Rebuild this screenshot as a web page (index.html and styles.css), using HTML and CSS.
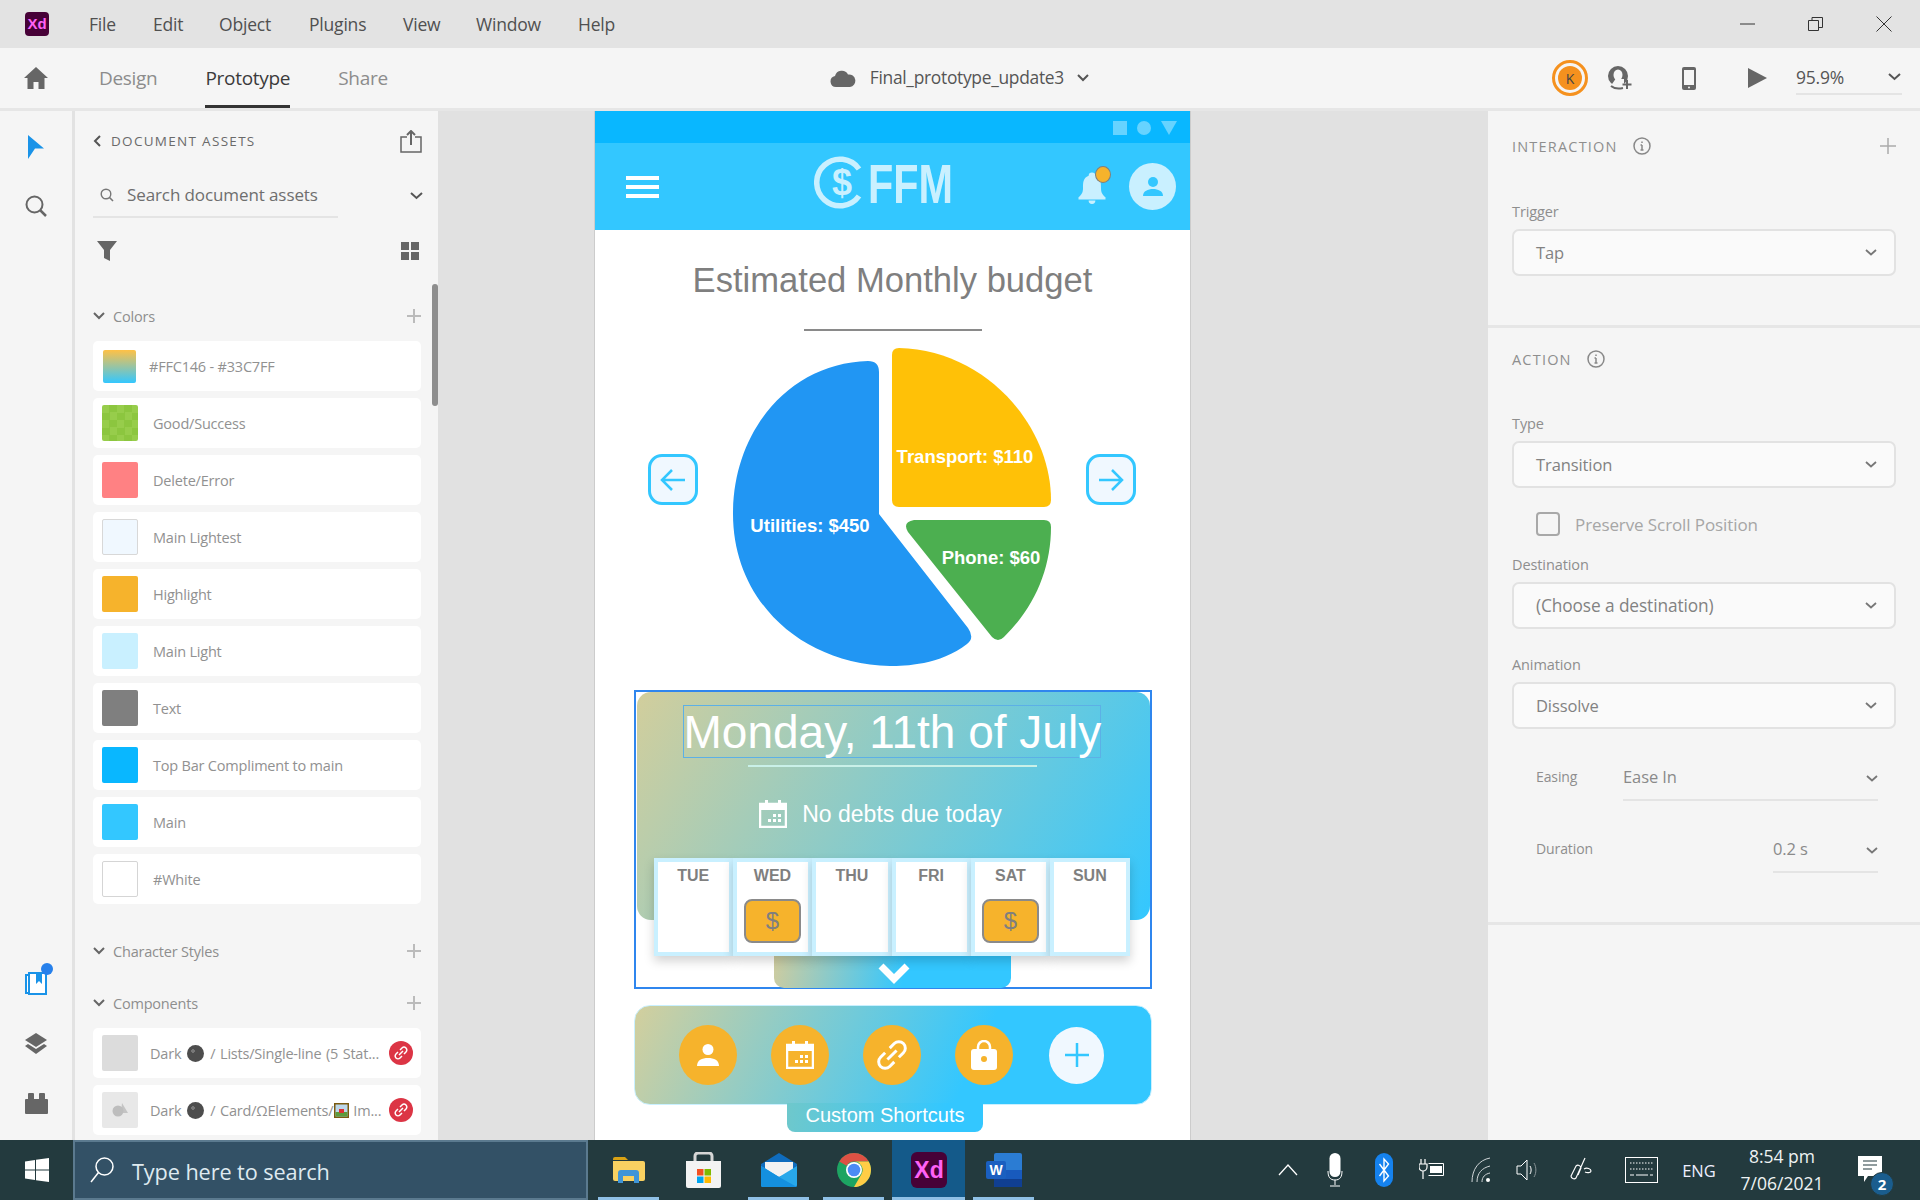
FILE: index.html
```html
<!DOCTYPE html>
<html lang="en">
<head>
<meta charset="utf-8">
<title>Adobe XD - Final_prototype_update3</title>
<link rel="stylesheet" href="styles.css">
</head>
<body>
<div class="app">
  <header class="titlebar">
    <svg class="xd-logo" width="24" height="24" viewBox="0 0 24 24"><rect width="24" height="24" rx="4" fill="#470137"/><text x="12" y="17" text-anchor="middle" class="xd-logo-text">Xd</text></svg>
    <nav class="menu"><span class="m-file">File</span><span class="m-edit">Edit</span><span class="m-object">Object</span><span class="m-plugins">Plugins</span><span class="m-view">View</span><span class="m-window">Window</span><span>Help</span></nav>
    <div class="winctl">
      <svg width="16" height="16" viewBox="0 0 16 16"><path d="M0 8h15" stroke="#333" fill="none"/></svg>
      <svg width="16" height="16" viewBox="0 0 16 16"><path d="M.5 4.500h10v10H.5zM4 4.500V1.500h10.500v10H11" stroke="#333" fill="none"/></svg>
      <svg width="16" height="16" viewBox="0 0 16 16"><path d="M.5.5l15 15M15.500.5l-15 15" stroke="#333" fill="none"/></svg>
    </div>
  </header>

  <div class="toolbar">
    <svg class="home" width="24" height="22" viewBox="0 0 24 22"><path d="M12 0L0 11h3.500v11h6v-7h5v7h6V11H24z" fill="#666"/></svg>
    <nav class="tabs"><span class="tab">Design</span><span class="tab tab-on">Prototype</span><span class="tab">Share</span></nav>
    <div class="doc">
      <svg width="26" height="17" viewBox="0 0 26 17"><path d="M6 17a5.500 5.500 0 0 1-1-10.900A7 7 0 0 1 18 4.500 6.300 6.300 0 0 1 20 17z" fill="#666"/></svg>
      <span class="doc-name">Final_prototype_update3</span>
      <svg class="chev" width="12" height="8" viewBox="0 0 12 8"><path d="M1 1l5 5 5-5" stroke="#555" stroke-width="2" fill="none"/></svg>
    </div>
    <div class="tool-right">
      <div class="avatar-k"><span>K</span></div>
      <svg class="i-share" width="26" height="24" viewBox="0 0 26 24"><circle cx="11" cy="10" r="10" fill="#666"/><ellipse cx="11" cy="9" rx="4.500" ry="5.500" fill="#f5f5f5"/><path d="M8.500 13L4 19.500c3 2.500 9 3 13 1V13z" fill="#f5f5f5"/><path d="M4 20c3 2.500 8 3 12 2" stroke="#666" stroke-width="2" fill="none"/><path d="M20 14v9M15.500 18.500h9" stroke="#666" stroke-width="2" fill="none"/></svg>
      <svg class="i-phone" width="14" height="23" viewBox="0 0 14 23"><rect width="14" height="23" rx="2" fill="#666"/><rect x="2" y="3" width="10" height="15" fill="#f5f5f5"/><circle cx="7" cy="20.500" r="1" fill="#f5f5f5"/></svg>
      <svg class="i-play" width="20" height="20" viewBox="0 0 20 20"><path d="M1 0l19 10L1 20z" fill="#666"/></svg>
      <div class="zoom-val"><span>95.9%</span><svg width="13" height="8" viewBox="0 0 13 8"><path d="M1 1l5.500 5L12 1" stroke="#555" stroke-width="2" fill="none"/></svg></div>
    </div>
  </div>

  <div class="main">
    <aside class="rail">
      <div class="rail-group">
        <svg width="18" height="24" viewBox="0 0 18 24"><path d="M1 0l16 13.500H8L1 24z" fill="#1a93e8"/></svg>
        <svg width="22" height="22" viewBox="0 0 22 22"><circle cx="9.500" cy="9.500" r="8" stroke="#666" stroke-width="2" fill="none"/><path d="M15 15l6 6" stroke="#666" stroke-width="2.500"/></svg>
      </div>
      <div class="rail-group rail-bottom">
        <div class="asset-ico">
          <svg width="22" height="24" viewBox="0 0 22 24"><path d="M4 4H1v18h3M4 2h17v21H4z" stroke="#1a93e8" stroke-width="2" fill="#fff"/><path d="M11 3h6v10l-3-3-3 3z" fill="#1a93e8"/></svg>
          <i class="asset-dot"></i>
        </div>
        <svg width="24" height="24" viewBox="0 0 24 24"><path d="M12 1l11 7-11 7L1 8z" fill="#666"/><path d="M1 12l3-2 8 5 8-5 3 2-11 8z" fill="#666" transform="translate(0 2)"/></svg>
        <svg width="23" height="21" viewBox="0 0 23 21"><path d="M0 7a1 1 0 0 1 1-1h2V1a1 1 0 0 1 1-1h4a1 1 0 0 1 1 1v5h5V1a1 1 0 0 1 1-1h4a1 1 0 0 1 1 1v5h2a1 1 0 0 1 1 1v13a1 1 0 0 1-1 1H1a1 1 0 0 1-1-1z" fill="#666"/></svg>
      </div>
    </aside>

    <section class="assets">
      <div class="assets-head">
        <svg width="8" height="12" viewBox="0 0 8 12"><path d="M7 1L2 6l5 5" stroke="#555" stroke-width="2" fill="none"/></svg>
        <span class="assets-title">DOCUMENT ASSETS</span>
        <svg class="push export" width="22" height="23" viewBox="0 0 22 23"><path d="M7 7H1v15h20V7h-6" stroke="#666" stroke-width="1.500" fill="none"/><path d="M11 15V2M7 5l4-4 4 4" stroke="#666" stroke-width="2" fill="none"/></svg>
      </div>
      <div class="search-row">
        <div class="search-box">
          <svg width="14" height="14" viewBox="0 0 14 14"><circle cx="6" cy="6" r="4.800" stroke="#777" stroke-width="1.400" fill="none"/><path d="M9.500 9.500L13 13" stroke="#777" stroke-width="1.600"/></svg>
          <span>Search document assets</span>
        </div>
        <svg class="push search-chev" width="13" height="8" viewBox="0 0 13 8"><path d="M1 1l5.500 5L12 1" stroke="#555" stroke-width="2" fill="none"/></svg>
      </div>
      <div class="filter-row">
        <svg width="20" height="20" viewBox="0 0 20 20"><path d="M0 0h20l-7 9v11l-6-3V9z" fill="#666"/></svg>
        <svg class="push" width="18" height="18" viewBox="0 0 18 18"><path d="M0 0h8v8H0zM10 0h8v8h-8zM0 10h8v8H0zM10 10h8v8h-8z" fill="#666"/></svg>
      </div>
      <div class="sec-head sec-colors">
        <svg width="12" height="8" viewBox="0 0 12 8"><path d="M1 1l5 5 5-5" stroke="#666" stroke-width="2" fill="none"/></svg>
        <span>Colors</span>
        <svg class="push" width="14" height="14" viewBox="0 0 14 14"><path d="M7 0v14M0 7h14" stroke="#bbb" stroke-width="2"/></svg>
      </div>
      <ul class="rows">
        <li class="row"><i class="sw sw-grad"></i><span class="row-t row-t-a">#FFC146 - #33C7FF</span></li>
        <li class="row"><i class="sw sw-good"></i><span class="row-t">Good/Success</span></li>
        <li class="row"><i class="sw sw-err"></i><span class="row-t">Delete/Error</span></li>
        <li class="row"><i class="sw sw-lightest"></i><span class="row-t">Main Lightest</span></li>
        <li class="row"><i class="sw sw-high"></i><span class="row-t">Highlight</span></li>
        <li class="row"><i class="sw sw-light"></i><span class="row-t">Main Light</span></li>
        <li class="row"><i class="sw sw-text"></i><span class="row-t">Text</span></li>
        <li class="row"><i class="sw sw-top"></i><span class="row-t">Top Bar Compliment to main</span></li>
        <li class="row"><i class="sw sw-main"></i><span class="row-t">Main</span></li>
        <li class="row"><i class="sw sw-white"></i><span class="row-t">#White</span></li>
      </ul>
      <div class="sec-head sec-char">
        <svg width="12" height="8" viewBox="0 0 12 8"><path d="M1 1l5 5 5-5" stroke="#666" stroke-width="2" fill="none"/></svg>
        <span>Character Styles</span>
        <svg class="push" width="14" height="14" viewBox="0 0 14 14"><path d="M7 0v14M0 7h14" stroke="#bbb" stroke-width="2"/></svg>
      </div>
      <div class="sec-head sec-comp">
        <svg width="12" height="8" viewBox="0 0 12 8"><path d="M1 1l5 5 5-5" stroke="#666" stroke-width="2" fill="none"/></svg>
        <span>Components</span>
        <svg class="push" width="14" height="14" viewBox="0 0 14 14"><path d="M7 0v14M0 7h14" stroke="#bbb" stroke-width="2"/></svg>
      </div>
      <ul class="rows rows-comp">
        <li class="row"><i class="sw sw-c1"></i><span class="comp-t">Dark <i class="moon"></i> / Lists/Single-line (5 Stat...</span>
          <svg class="link" width="24" height="24" viewBox="0 0 24 24"><circle cx="12" cy="12" r="12" fill="#dc3545"/><path d="M10 14l4-4M9 11l-2 2a2.800 2.800 0 0 0 4 4l2-2M15 13l2-2a2.800 2.800 0 0 0-4-4l-2 2" stroke="#fff" stroke-width="1.500" fill="none"/></svg></li>
        <li class="row"><i class="sw sw-c2"><svg width="16" height="14" viewBox="0 0 16 14"><path d="M10 0l6 10H9z" fill="#c4c4c4"/><circle cx="6" cy="8" r="5.500" fill="#bdbdbd"/></svg></i><span class="comp-t">Dark <i class="moon"></i> / Card/ΩElements/<svg class="pic" width="15" height="15" viewBox="0 0 15 15"><rect width="15" height="15" fill="#7a5a10"/><rect x="1.500" y="1.500" width="12" height="12" fill="#bcd7ea"/><rect x="1.500" y="9" width="12" height="4.500" fill="#5d9b3c"/><rect x="5" y="6" width="5" height="4" fill="#d33"/></svg> Im...</span>
          <svg class="link" width="24" height="24" viewBox="0 0 24 24"><circle cx="12" cy="12" r="12" fill="#dc3545"/><path d="M10 14l4-4M9 11l-2 2a2.800 2.800 0 0 0 4 4l2-2M15 13l2-2a2.800 2.800 0 0 0-4-4l-2 2" stroke="#fff" stroke-width="1.500" fill="none"/></svg></li>
      </ul>
      <i class="scrollbar"></i>
    </section>

    <section class="canvas">
      <article class="board">
        <div class="status"><i class="st-sq"></i><i class="st-ci"></i><i class="st-tr"></i></div>
        <div class="bar">
          <div class="burger"><i></i><i></i><i></i></div>
          <svg class="logo" width="172" height="58" viewBox="0 0 172 58">
            <path d="M45 13A23.300 23.300 0 1 0 45 40" stroke="#c9f0ff" stroke-width="5.500" fill="none"/>
            <text x="18" y="39" class="logo-d">$</text>
            <text x="54" y="46.500" class="logo-t" textLength="85" lengthAdjust="spacingAndGlyphs">FFM</text>
          </svg>
          <div class="bell-wrap">
            <svg width="36" height="36" viewBox="0 0 32 32"><path d="M16 3a3 3 0 0 0-3 3C8 8 8 12 8 17c0 4-1.500 6-4 8v2h24v-2c-2.500-2-4-4-4-8 0-5 0-9-5-11a3 3 0 0 0-3-3z" fill="#c9f0ff"/><path d="M13 28a3 3 0 0 0 6 0z" fill="#c9f0ff"/></svg>
            <i class="bell-dot"></i>
          </div>
          <div class="user"><svg width="26" height="26" viewBox="0 0 26 26"><circle cx="13" cy="8" r="5" fill="#33c7ff"/><path d="M3 22c0-5 5-7 10-7s10 2 10 7z" fill="#33c7ff"/></svg></div>
        </div>
        <h1 class="b-title">Estimated Monthly budget</h1>
        <div class="b-rule"></div>
        <div class="chart">
          <button class="arrow" type="button"><svg width="26" height="24" viewBox="0 0 26 24"><path d="M25 12H2M12 2L2 12l10 10" stroke="#33c7ff" stroke-width="2.500" fill="none"/></svg></button>
          <svg class="pie" width="340" height="340" viewBox="722 340 340 340">
            <path d="M879 514L968 628Q975 638 967 644C940 665 905 666 890 666C800 664 733 600 733 514C733 430 790 363 868 361Q879 361 879 372Z" fill="#2196f3"/>
            <path d="M892 355Q892 348 899 348C985 350 1051 425 1051 500Q1051 507 1044 507L899 507Q892 507 892 500Z" fill="#ffc107"/>
            <path d="M914 520L1044 520Q1051 520 1051 527C1051 568 1035 607 1004 637Q998 643 992 637L908 532Q902 522 914 520Z" fill="#4caf50"/>
            <text x="810" y="532" class="pie-t" text-anchor="middle">Utilities: $450</text>
            <text x="965" y="463" class="pie-t" text-anchor="middle">Transport: $110</text>
            <text x="991" y="564" class="pie-t" text-anchor="middle">Phone: $60</text>
          </svg>
          <button class="arrow" type="button"><svg width="26" height="24" viewBox="0 0 26 24"><path d="M1 12h23M14 2l10 10-10 10" stroke="#33c7ff" stroke-width="2.500" fill="none"/></svg></button>
        </div>
        <div class="sel">
          <div class="panel">
            <div class="date">Monday, 11th of July</div>
            <div class="date-rule"></div>
            <div class="note">
              <svg width="28" height="28" viewBox="0 0 28 28"><path d="M1 4h26v23H1z" stroke="#fff" stroke-width="2.500" fill="none"/><path d="M1 4h26v6H1zM6 0h3v5H6zM19 0h3v5h-3z" fill="#fff"/><path d="M14 14h3v3h-3zM19 14h3v3h-3zM9 19h3v3H9zM14 19h3v3h-3zM19 19h3v3h-3z" fill="#fff"/></svg>
              <span>No debts due today</span>
            </div>
            <div class="week">
              <div class="day"><b>TUE</b></div>
              <div class="day"><b>WED</b><span class="pay">$</span></div>
              <div class="day"><b>THU</b></div>
              <div class="day"><b>FRI</b></div>
              <div class="day"><b>SAT</b><span class="pay">$</span></div>
              <div class="day"><b>SUN</b></div>
            </div>
          </div>
          <div class="more"><svg width="34" height="26" viewBox="0 0 34 26"><path d="M4 5l13 13L30 5" stroke="#fff" stroke-width="7" fill="none"/></svg></div>
        </div>
        <div class="shortcuts">
          <span class="sc"><svg width="24" height="24" viewBox="0 0 24 24"><circle cx="12" cy="6.500" r="5.500" fill="#fff"/><path d="M1 23c0-6 5-8 11-8s11 2 11 8z" fill="#fff"/></svg></span>
          <span class="sc"><svg width="28" height="28" viewBox="0 0 28 28"><path d="M1 4h26v23H1z" stroke="#fff" stroke-width="2.500" fill="none"/><path d="M1 4h26v6H1zM6 0h3v5H6zM19 0h3v5h-3z" fill="#fff"/><path d="M14 14h3v3h-3zM19 14h3v3h-3zM9 19h3v3H9zM14 19h3v3h-3zM19 19h3v3h-3z" fill="#fff"/></svg></span>
          <span class="sc"><svg width="32" height="32" viewBox="5 5 14 14"><path d="M10 14l4-4M9 11l-2 2a2.800 2.800 0 0 0 4 4l2-2M15 13l2-2a2.800 2.800 0 0 0-4-4l-2 2" stroke="#fff" stroke-width="1.300" fill="none"/></svg></span>
          <span class="sc"><svg width="26" height="30" viewBox="0 0 26 30"><path d="M7 11V7a6 6 0 0 1 12 0v4" stroke="#fff" stroke-width="2.500" fill="none"/><rect y="9" width="26" height="21" rx="3" fill="#fff"/><circle cx="13" cy="19" r="3" fill="#f6b32c"/></svg></span>
          <span class="sc sc-add"><svg width="26" height="26" viewBox="0 0 26 26"><path d="M13 1v24M1 13h24" stroke="#33c7ff" stroke-width="2.500"/></svg></span>
        </div>
        <div class="sc-tab">Custom Shortcuts</div>
      </article>
    </section>

    <aside class="inspector">
      <section class="ins-a">
        <div class="ins-head"><span class="ins-title">INTERACTION</span>
          <svg width="18" height="18" viewBox="0 0 18 18"><circle cx="9" cy="9" r="8" stroke="#888" stroke-width="1.500" fill="none"/><path d="M9 8v5M7.500 8H9M7.500 13h3M9 4.500v1.500" stroke="#888" stroke-width="1.500"/></svg>
          <svg class="push" width="16" height="16" viewBox="0 0 16 16"><path d="M8 0v16M0 8h16" stroke="#aaa" stroke-width="1.500"/></svg>
        </div>
        <label class="lbl l-trigger">Trigger</label>
        <div class="sel-box"><span>Tap</span><svg width="12" height="7" viewBox="0 0 12 7"><path d="M1 1l5 4.500L11 1" stroke="#777" stroke-width="1.800" fill="none"/></svg></div>
      </section>
      <section class="ins-b">
        <div class="ins-head"><span class="ins-title">ACTION</span>
          <svg width="18" height="18" viewBox="0 0 18 18"><circle cx="9" cy="9" r="8" stroke="#888" stroke-width="1.500" fill="none"/><path d="M9 8v5M7.500 8H9M7.500 13h3M9 4.500v1.500" stroke="#888" stroke-width="1.500"/></svg>
        </div>
        <label class="lbl l-type">Type</label>
        <div class="sel-box"><span>Transition</span><svg width="12" height="7" viewBox="0 0 12 7"><path d="M1 1l5 4.500L11 1" stroke="#777" stroke-width="1.800" fill="none"/></svg></div>
        <div class="check"><i class="box"></i><span>Preserve Scroll Position</span></div>
        <label class="lbl l-dest">Destination</label>
        <div class="sel-box sel-dest"><span>(Choose a destination)</span><svg width="12" height="7" viewBox="0 0 12 7"><path d="M1 1l5 4.500L11 1" stroke="#777" stroke-width="1.800" fill="none"/></svg></div>
        <label class="lbl l-anim">Animation</label>
        <div class="sel-box"><span>Dissolve</span><svg width="12" height="7" viewBox="0 0 12 7"><path d="M1 1l5 4.500L11 1" stroke="#777" stroke-width="1.800" fill="none"/></svg></div>
        <div class="prop p-ease"><span class="prop-l">Easing</span><div class="prop-v v-ease"><span>Ease In</span><svg width="12" height="7" viewBox="0 0 12 7"><path d="M1 1l5 4.500L11 1" stroke="#777" stroke-width="1.800" fill="none"/></svg></div></div>
        <div class="prop p-dur"><span class="prop-l">Duration</span><div class="prop-v v-dur"><span>0.2 s</span><svg width="12" height="7" viewBox="0 0 12 7"><path d="M1 1l5 4.500L11 1" stroke="#777" stroke-width="1.800" fill="none"/></svg></div></div>
      </section>
    </aside>
  </div>

  <footer class="taskbar">
    <div class="start"><svg width="24" height="24" viewBox="0 0 24 24"><path d="M0 3.400L10 2v9.500H0zM11 1.800L24 0v11.500H11zM0 12.500h10V22L0 20.600zM11 12.500h13V24l-13-1.800z" fill="#fff"/></svg></div>
    <div class="tb-search">
      <svg width="24" height="26" viewBox="0 0 24 26"><circle cx="14.500" cy="9.500" r="8.500" stroke="#fff" stroke-width="1.500" fill="none"/><path d="M8.500 15.500L1 25" stroke="#fff" stroke-width="1.500"/></svg>
      <span>Type here to search</span>
    </div>
    <div class="tb-apps">
      <div class="tapp tapp-u">
        <svg width="32" height="26" viewBox="0 0 32 26"><path d="M0 2a2 2 0 0 1 2-2h10l3 3h-15z" fill="#d9a214"/><path d="M0 4h30a2 2 0 0 1 2 2v16a2 2 0 0 1-2 2H2a2 2 0 0 1-2-2z" fill="#f9d161"/><path d="M5 26V16a3 3 0 0 1 3-3h15a3 3 0 0 1 3 3v10h-5v-7H10v7z" fill="#3f95d8"/></svg>
      </div>
      <div class="tapp">
        <svg width="35" height="36" viewBox="0 0 35 36"><path d="M9 11V4a3 3 0 0 1 3-3h11a3 3 0 0 1 3 3v7" stroke="#d6d6d6" stroke-width="3" fill="none"/><path d="M0 9h35v25a2 2 0 0 1-2 2H2a2 2 0 0 1-2-2z" fill="#f3f3f3"/><path d="M11 17h6.500v6.500H11z" fill="#f25022"/><path d="M18.500 17H25v6.500h-6.500z" fill="#7fba00"/><path d="M11 24.500h6.500V31H11z" fill="#00a4ef"/><path d="M18.500 24.500H25V31h-6.500z" fill="#ffb900"/></svg>
      </div>
      <div class="tapp tapp-u">
        <svg width="36" height="34" viewBox="0 0 36 34"><path d="M0 11L18 0l18 11v21a2 2 0 0 1-2 2H2a2 2 0 0 1-2-2z" fill="#0f6cbd"/><path d="M4 9h28v9L18 24 4 18z" fill="#f2f2f2"/><path d="M0 13l18 11 18-11v19a2 2 0 0 1-2 2H2a2 2 0 0 1-2-2z" fill="#28a8ea"/><path d="M0 32V13l18 11L36 34H2a2 2 0 0 1-2-2z" fill="#1490df"/></svg>
      </div>
      <div class="tapp tapp-u">
        <svg width="34" height="34" viewBox="0 0 34 34"><circle cx="17" cy="17" r="17" fill="#1da462"/><path d="M17 0a17 17 0 0 1 14.700 8.500H17a8.500 8.500 0 0 0-7.400 4.300L2.300 8.500A17 17 0 0 1 17 0z" fill="#dd5144"/><path d="M31.700 8.500A17 17 0 0 1 17 34l7.400-12.700A8.500 8.500 0 0 0 17 8.500z" fill="#ffcd46"/><circle cx="17" cy="17" r="8" fill="#fff"/><circle cx="17" cy="17" r="6.300" fill="#4c8bf5"/></svg>
      </div>
      <div class="tapp tapp-on tapp-u">
        <svg width="36" height="36" viewBox="0 0 36 36"><rect width="36" height="36" rx="6" fill="#470137"/><text x="18" y="26" text-anchor="middle" class="tb-xd">Xd</text></svg>
      </div>
      <div class="tapp tapp-u">
        <svg width="36" height="34" viewBox="0 0 36 34"><rect x="8" width="28" height="34" rx="2" fill="#2b7cd3"/><rect x="8" y="17" width="28" height="9" fill="#185abd"/><rect x="8" y="26" width="28" height="8" fill="#103f91"/><rect y="8" width="20" height="18" rx="2" fill="#1a5fc0"/><text x="10" y="22" text-anchor="middle" class="tb-w">W</text></svg>
      </div>
    </div>
    <div class="tray">
      <span class="t"><svg width="20" height="12" viewBox="0 0 20 12"><path d="M1 11L10 1l9 10" stroke="#fff" stroke-width="1.300" fill="none"/></svg></span>
      <span class="t"><svg width="16" height="34" viewBox="0 0 16 34"><rect x="2.500" y="0" width="11" height="24" rx="5.500" fill="#fff"/><path d="M1 18c0 6 2 9 7 9s7-3 7-9M8 27v5M3 33h10" stroke="#fff" fill="none"/></svg></span>
      <span class="t"><svg width="18" height="34" viewBox="0 0 18 34"><rect width="18" height="34" rx="9" fill="#1582ee"/><path d="M4.500 11l9 12-4.500 5V6l4.500 5-9 12" stroke="#fff" stroke-width="1.400" fill="none"/></svg></span>
      <span class="t"><svg width="26" height="24" viewBox="0 0 26 24"><path d="M9.500 5.500h15v12h-15" stroke="#fff" fill="none"/><path d="M11 8h12v7H11z" fill="#fff"/><path d="M2 1v5M6 1v5M0 6h8v3a4 4 0 0 1-8 0zM4 13v8" stroke="#fff" fill="none" stroke-width="1.200"/></svg></span>
      <span class="t"><svg width="20" height="26" viewBox="0 0 20 26"><path d="M1 25C1 12 8 3 19 1M6 25c0-9 5-14 13-16M11 25c0-5 3-8 8-9" stroke="#d0d6d8" fill="none"/><circle cx="17" cy="23" r="2" fill="#fff"/></svg></span>
      <span class="t"><svg width="22" height="24" viewBox="0 0 22 24"><path d="M1 8h4l6-6v20l-6-6H1z" stroke="#fff" fill="none"/><path d="M14 8c1.500 2 1.500 6 0 8" stroke="#fff" fill="none"/><path d="M18 5c2.500 4 2.500 10 0 14" stroke="#8a9598" fill="none"/></svg></span>
      <span class="t"><svg width="22" height="28" viewBox="0 0 22 28"><path d="M15 2l-9 20a3 3 0 0 1-5-2l5-10a3 3 0 0 1 5 2l-3 7M14 13c3-2 7 0 7 2s-4 2-6 1" stroke="#fff" stroke-width="1.200" fill="none"/></svg></span>
      <span class="t"><svg width="33" height="26" viewBox="0 0 33 26"><rect x=".5" y=".5" width="32" height="25" stroke="#fff" fill="none"/><path d="M5 6h23M5 12h23" stroke="#fff" stroke-dasharray="1.500 1.500"/><path d="M5 18h4M11 18h12M25 18h3" stroke="#fff"/></svg></span>
      <span class="t t-eng">ENG</span>
      <span class="t t-clock"><span>8:54 pm</span><span>7/06/2021</span></span>
      <span class="t t-note">
        <svg width="24" height="28" viewBox="0 0 24 28"><path d="M0 0h24v20H10l-4 6v-6H0z" fill="#fff"/><path d="M5 5h14M5 9h14M5 13h9" stroke="#233a3e" stroke-width="1.200"/></svg>
        <b class="badge">2</b>
      </span>
    </div>
  </footer>
</div>
</body>
</html>
```

FILE: styles.css
```css
* { box-sizing: border-box; }
html, body { margin: 0; padding: 0; }
body { font-family: "Open Sans", "Noto Sans", sans-serif; background: #e1e1e1; overflow: hidden; }
ul { list-style: none; margin: 0; padding: 0; }
i { display: block; font-style: normal; }
.push { margin-left: auto; }

.app { width: 1920px; height: 1200px; display: flex; flex-direction: column; overflow: hidden; }

/* title bar */
.titlebar { height: 48px; flex: none; background: #e3e3e3; display: flex; align-items: center; padding-left: 25px; }
.xd-logo-text { font: bold 15px "Liberation Sans", sans-serif; fill: #ff61f6; }
.menu { display: flex; margin-left: 40px; font-size: 17.500px; color: #505050; letter-spacing: -.2px; }
.m-file { width: 64px; }
.m-edit { width: 66px; }
.m-object { width: 90px; }
.m-plugins { width: 94px; }
.m-view { width: 73px; }
.m-window { width: 102px; }
.winctl { margin-left: auto; display: flex; align-items: center; gap: 52px; padding-right: 28px; }

/* tool bar */
.toolbar { height: 63px; flex: none; background: #f5f5f5; border-bottom: 3px solid #e6e6e6; display: flex; align-items: center; padding-left: 24px; position: relative; }
.tabs { display: flex; height: 60px; margin-left: 51px; gap: 48px; font-size: 19px; color: #8c8c8c; letter-spacing: -.3px; }
.tab { display: flex; align-items: center; padding-top: 2px; border-bottom: 3px solid transparent; }
.tab-on { color: #3b3b3b; border-bottom-color: #333; }
.doc { display: flex; align-items: center; margin-left: 442px; }
.doc-name { margin: -2px 0 0 14px; font-size: 17.400px; color: #555; letter-spacing: -.3px; }
.doc .chev { margin-left: 13px; }
.tool-right { margin-left: auto; display: flex; align-items: center; padding-right: 18px; }
.avatar-k { width: 36px; height: 36px; border-radius: 50%; border: 3px solid #f5911e; padding: 3px; background: #f5f5f5; }
.avatar-k span { display: flex; justify-content: center; align-items: center; width: 100%; height: 100%; border-radius: 50%; background: #f5911e; font-size: 14px; color: #444; }
.i-share { margin-left: 19px; }
.i-phone { margin-left: 49px; }
.i-play { margin-left: 51px; }
.zoom-val { width: 106px; height: 34px; margin-left: 29px; border-bottom: 2px solid #e4e4e4; display: flex; align-items: center; justify-content: space-between; padding-right: 1px; font-size: 17.500px; color: #555; letter-spacing: -.2px; }

/* body */
.main { flex: 1; display: flex; min-height: 0; }
.rail { width: 75px; flex: none; background: #f5f5f5; border-right: 3px solid #e2e2e2; display: flex; flex-direction: column; justify-content: space-between; align-items: center; padding: 24px 0 26px; }
.rail-group { display: flex; flex-direction: column; align-items: center; gap: 36px; }
.rail-bottom { gap: 37px; }
.asset-ico { position: relative; height: 24px; }
.asset-dot { position: absolute; top: -8px; right: -6px; width: 12px; height: 12px; border-radius: 50%; background: #2680eb; }

/* assets */
.assets { width: 363px; flex: none; background: #f5f5f5; padding: 0 17px 0 18px; position: relative; overflow: hidden; }
.assets-head { display: flex; align-items: center; height: 34px; margin-top: 13px; }
.assets-title { margin-left: 10px; font-size: 13.500px; letter-spacing: 1.300px; color: #6a6a6a; }
.export { margin-right: -1px; }
.search-row { display: flex; align-items: center; margin-top: 15px; height: 45px; }
.search-box { width: 245px; height: 45px; border-bottom: 2px solid #e4e4e4; display: flex; align-items: center; padding-left: 7px; gap: 13px; font-size: 17px; color: #6e6e6e; letter-spacing: -.1px; white-space: nowrap; }
.search-chev { margin-right: -2px; }
.filter-row { display: flex; align-items: center; height: 24px; margin-top: 21px; padding-left: 4px; padding-right: 2px; }
.sec-head { display: flex; align-items: center; height: 20px; font-size: 14.500px; color: #8e8e8e; }
.sec-head span { margin-left: 8px; letter-spacing: -.2px; }
.sec-colors { margin-top: 43px; }
.sec-char { margin-top: 37px; }
.sec-comp { margin-top: 32px; }
.rows { display: flex; flex-direction: column; gap: 7px; margin-top: 15px; }
.rows-comp { margin-top: 15px; }
.row { height: 50px; background: #fff; border-radius: 5px; display: flex; align-items: center; padding: 0 8px 0 9px; font-size: 14.500px; color: #919191; letter-spacing: -.2px; }
.sw { width: 36px; height: 36px; flex: none; border-radius: 2px; }
.row-t { margin-left: 15px; }
.row-t-a { margin-left: 13px; }
.sw-grad { width: 33px; height: 33px; margin-left: 1px; background: linear-gradient(#ffc146, #33c7ff); }
.sw-good { background: conic-gradient(#8cc63f 25%, #97cd4b 0 50%, #8cc63f 0 75%, #97cd4b 0) 0 0 / 15px 15px; }
.sw-err { background: #ff8183; }
.sw-lightest { background: #f0f8ff; border: 1px solid #d8d8d8; }
.sw-high { background: #f6b32c; }
.sw-light { background: #c9f0ff; }
.sw-text { background: #7f7f7f; }
.sw-top { background: #09b7ff; }
.sw-main { background: #33c7ff; }
.sw-white { background: #fff; border: 1px solid #d5d5d5; }
.sw-c1 { background: #dcdcdc; }
.sw-c2 { background: #e8e8e8; display: flex; align-items: center; justify-content: center; }
.comp-t { margin-left: 12px; white-space: nowrap; display: flex; align-items: center; gap: 0; word-spacing: 1px; }
.moon { width: 17px; height: 17px; margin: 0 6px; border-radius: 50%; background: radial-gradient(circle at 35% 35%, #777 0 12%, #4d4d4d 13%); }
.pic { margin: 0 4px 0 1px; }
.link { margin-left: auto; flex: none; }
.scrollbar { position: absolute; right: 0; top: 173px; width: 6px; height: 122px; border-radius: 3px; background: #8e8e8e; }

/* canvas */
.canvas { flex: 1; background: #e1e1e1; padding-left: 156px; min-width: 0; overflow: hidden; }
.board { width: 597px; height: 1029px; background: #fff; border-left: 1px solid #ccc; border-right: 1px solid #ccc; overflow: hidden; }
.status { height: 32px; background: #09b7ff; display: flex; align-items: center; justify-content: flex-end; gap: 10px; padding: 2px 13px 0 0; }
.st-sq { width: 14px; height: 14px; background: #66d3ff; }
.st-ci { width: 14px; height: 14px; border-radius: 50%; background: #66d3ff; }
.st-tr { width: 0; height: 0; border-left: 8px solid transparent; border-right: 8px solid transparent; border-top: 14px solid #66d3ff; }
.bar { height: 87px; background: #33c7ff; display: flex; align-items: center; padding-left: 31px; }
.burger { width: 33px; display: flex; flex-direction: column; gap: 5px; margin-top: 0; }
.burger i { height: 4px; background: #fff; }
.logo { margin-left: 155px; margin-top: -4px; }
.logo-d { font: bold 36px "Liberation Sans", sans-serif; fill: #c9f0ff; }
.logo-t { font: bold 56px "Liberation Sans", sans-serif; fill: #c9f0ff; }
.bell-wrap { position: relative; margin-left: 88px; height: 36px; }
.bell-dot { position: absolute; top: -3px; right: -1px; width: 16px; height: 17px; border-radius: 50%; background: #f6b32c; border: 1.500px solid #7f7f7f; }
.user { width: 47px; height: 47px; margin-left: 19px; border-radius: 50%; background: #c9f0ff; display: flex; align-items: center; justify-content: center; }
.b-title { margin: 30px 0 0; height: 40px; font: 400 34.600px/40px "Liberation Sans", sans-serif; color: #7f7f7f; text-align: center; }
.b-rule { width: 178px; height: 2px; margin: 29px auto 0; background: #8a8a8a; }
.chart { height: 359px; display: flex; gap: 24px; padding: 0 0 0 53px; margin-top: 9px; position: relative; }
.arrow { width: 50px; height: 51px; margin-top: 114px; flex: none; padding: 0; background: #f0f8ff; border: 3px solid #33c7ff; border-radius: 14px; display: flex; align-items: center; justify-content: center; }
.pie { flex: none; }
.pie-t { font: bold 18.500px "Liberation Sans", sans-serif; fill: #fff; }
.sel { width: 518px; height: 299px; margin: -9px 0 0 39px; border: 2px solid #2f86ee; position: relative; }
.panel { height: 228px; margin: 0 0 0 1px; padding-right: 4px; border-radius: 14px; background: linear-gradient(120deg, #d2ce9c 0%, #33c7ff 100%); display: flex; flex-direction: column; align-items: center; }
.panel > * { flex: none; }
.date { width: 418px; height: 53px; margin-top: 13px; border: 1px solid #5cb0e6; font: 400 46px/53px "Liberation Sans", sans-serif; color: #fff; text-align: center; white-space: nowrap; }
.date-rule { width: 289px; height: 2px; margin: 7px 0 0 2px; background: #c9f0e8; }
.note { display: flex; align-items: center; gap: 15px; height: 30px; margin: 32px 22px 0 0; font: 400 23px "Liberation Sans", sans-serif; color: #fff; }
.week { width: 476px; height: 98px; margin-top: 29px; display: grid; grid-template-columns: repeat(6, 1fr); }
.day { background: #fff; border: 4px solid #c9f0ff; box-shadow: 0 5px 10px rgba(0, 0, 0, .18); display: flex; flex-direction: column; align-items: center; font: 400 16px "Liberation Sans", sans-serif; color: #7f7f7f; padding-top: 5px; }
.day b { line-height: 18px; }
.pay { width: 57px; height: 44px; margin-top: 14px; background: #f6b32c; border: 2px solid #8a8a8a; border-radius: 8px; display: flex; align-items: center; justify-content: center; font-size: 24px; color: #7f7f7f; }
.more { width: 237px; height: 33px; margin: 35px 0 0 138px; border-radius: 0 0 10px 10px; background: linear-gradient(100deg, #cfcc9f 0%, #33c7ff 55%); display: flex; align-items: center; justify-content: center; padding: 4px 0 0 2px; }
.shortcuts { width: 518px; height: 100px; margin: 16px 0 0 39px; border: 1px solid #c9f0ff; border-radius: 16px; background: linear-gradient(115deg, #d3cf9d 0%, #33c7ff 65%); display: flex; align-items: center; gap: 34px; padding-left: 44px; }
.sc { width: 58px; height: 60px; border-radius: 50%; background: #f6b32c; display: flex; align-items: center; justify-content: center; flex: none; }
.sc-add { width: 55px; height: 57px; margin-left: 2px; background: #f0f8ff; }
.sc-tab { width: 196px; height: 29px; margin: -2px 0 0 192px; border-radius: 0 0 8px 8px; background: linear-gradient(100deg, #6fc8cb 0%, #33c7ff 80%); font: 400 20px/25px "Liberation Sans", sans-serif; color: #fff; text-align: center; }

/* inspector */
.inspector { width: 432px; flex: none; background: #f5f5f5; }
.ins-a { height: 217px; border-bottom: 3px solid #e6e6e6; padding: 25px 24px 0; }
.ins-b { height: 597px; border-bottom: 3px solid #e6e6e6; padding: 21px 24px 0; }
.ins-head { display: flex; align-items: center; height: 20px; gap: 15px; }
.ins-title { font-size: 14.500px; letter-spacing: 1.200px; color: #8e8e8e; }
.lbl { display: block; font-size: 14.500px; line-height: 20px; color: #8e8e8e; letter-spacing: -.1px; }
.l-trigger { margin-top: 46px; }
.l-type { margin-top: 45px; }
.l-dest { margin-top: 18px; }
.l-anim { margin-top: 26px; }
.sel-box { width: 384px; height: 47px; margin-top: 7px; background: #fafafa; border: 2px solid #e2e2e2; border-radius: 7px; display: flex; align-items: center; justify-content: space-between; padding: 0 17px 0 22px; font-size: 16.500px; color: #828282; letter-spacing: -.1px; }
.sel-dest { font-size: 17.300px; }
.check { display: flex; align-items: center; gap: 15px; height: 26px; margin: 23px 0 0 24px; font-size: 17px; color: #a6a6a6; letter-spacing: -.1px; }
.box { width: 24px; height: 24px; border: 2.500px solid #a8a8a8; border-radius: 4px; }
.prop { display: flex; margin-left: 24px; font-size: 14px; color: #8e8e8e; position: relative; align-items: flex-start; width: 342px; }
.p-ease { margin-top: 27px; }
.p-dur { margin-top: 27px; }
.prop-l { width: 87px; padding-top: 11px; line-height: 20px; letter-spacing: -.1px; }
.prop-v { height: 45px; border-bottom: 2px solid #e4e4e4; display: flex; align-items: center; justify-content: space-between; font-size: 16.500px; color: #8a8a8a; letter-spacing: -.1px; }
.prop-v span { margin-top: -2px; }
.prop-v svg { margin-top: 2px; }
.v-ease { width: 255px; }
.v-dur { width: 105px; margin-left: 150px; }

/* task bar */
.taskbar { height: 60px; flex: none; background: #233a3e; display: flex; }
.start { width: 73px; display: flex; align-items: center; justify-content: center; }
.tb-search { width: 515px; background: #335166; border: 2px solid #5b7a8f; display: flex; align-items: center; padding-left: 15px; gap: 18px; font-size: 21.700px; color: #dfeaf0; letter-spacing: -.1px; }
.tb-search span { margin-top: 3px; }
.tb-apps { display: flex; margin-left: 3px; }
.tapp { width: 75px; display: flex; align-items: center; justify-content: center; position: relative; }
.tapp-u::after { content: ""; position: absolute; bottom: 0; left: 7px; right: 7px; height: 3px; background: #8fc0e6; }
.tapp-on { background: #145a8a; margin: 0 1px; width: 73px; }
.tapp-on::after { left: 0; right: 0; }
.tb-xd { font: bold 23px "Liberation Sans", sans-serif; fill: #ff61f6; }
.tb-w { font: bold 14px "Liberation Sans", sans-serif; fill: #fff; }
.tray { width: 656px; display: grid; grid-template-columns: 48px 46px 52px 44px 54px 38px 70px 50px 66px 100px 76px; align-items: center; justify-items: center; margin-left: auto; color: #fff; }
.t { display: flex; align-items: center; justify-content: center; position: relative; }
.t-eng { font-size: 16.500px; color: #eef; }
.t-clock { flex-direction: column; font-size: 17.500px; line-height: 27px; color: #eef3f3; white-space: nowrap; }
.badge { position: absolute; right: -12px; bottom: -12px; width: 24px; height: 24px; border-radius: 50%; background: #1a5d8e; border: 1px solid #233a3e; display: flex; align-items: center; justify-content: center; font: 700 15px "Open Sans", sans-serif; color: #fff; }
```
